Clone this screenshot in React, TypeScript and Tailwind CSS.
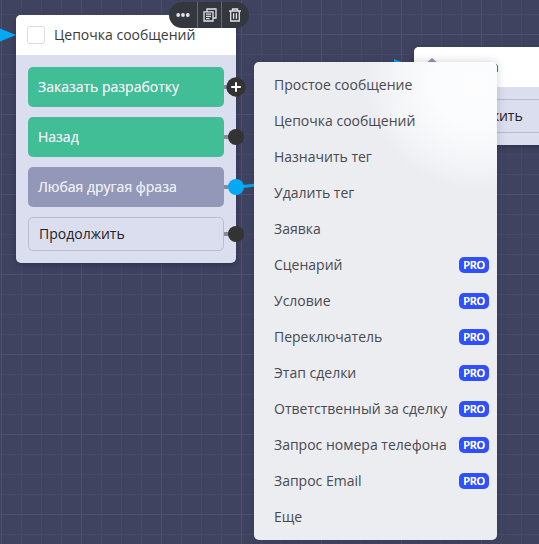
import React from 'react';

type Item = { label: string; pro?: boolean };

const items: Item[] = [
  { label: 'Простое сообщение' },
  { label: 'Цепочка сообщений' },
  { label: 'Назначить тег' },
  { label: 'Удалить тег' },
  { label: 'Заявка' },
  { label: 'Сценарий', pro: true },
  { label: 'Условие', pro: true },
  { label: 'Переключатель', pro: true },
  { label: 'Этап сделки', pro: true },
  { label: 'Ответственный за сделку', pro: true },
  { label: 'Запрос номера телефона', pro: true },
  { label: 'Запрос Email', pro: true },
  { label: 'Еще' },
];

function Grid() {
  return (
    <svg className="absolute inset-0" width="539" height="544" shapeRendering="crispEdges">
      <defs>
        <pattern id="minor" x="1" y="14" width="20" height="20" patternUnits="userSpaceOnUse">
          <path d="M0 0.5H20M0.5 0V20" stroke="#464966" />
        </pattern>
        <pattern id="major" x="1" y="34" width="80" height="80" patternUnits="userSpaceOnUse">
          <path d="M0 0.5H80M0.5 0V80" stroke="#4e516e" />
        </pattern>
      </defs>
      <rect width="539" height="544" fill="url(#minor)" />
      <rect width="539" height="544" fill="url(#major)" />
    </svg>
  );
}

function Port({ kind }: { kind: 'plus' | 'blue' | 'dark' }) {
  return (
    <span className="absolute top-1/2 left-full flex h-5 w-[23px] -translate-y-1/2 items-center">
      <span className="absolute left-0 h-1 w-3 bg-[#858aa0]" />
      {kind === 'plus' ? (
        <svg className="absolute left-[2px]" width="20" height="20" viewBox="0 0 20 20">
          <circle cx="10" cy="10" r="9.7" fill="#333" />
          <path d="M10 5.2v9.6M5.2 10h9.6" stroke="#fff" strokeWidth="2" />
        </svg>
      ) : (
        <span className={`absolute left-[4px] size-4 rounded-full ${kind === 'blue' ? 'bg-[#03a9f4]' : 'bg-[#333]'}`} />
      )}
    </span>
  );
}

function Choice({ label, color, port }: { label: string; color: string; port: 'plus' | 'blue' | 'dark' }) {
  return (
    <div className={`relative flex h-10 items-center rounded-[5px] pl-[10px] text-[#e9edf3] [text-shadow:0_0_0.5px_#e9edf3] ${color}`}>
      {label}
      <Port kind={port} />
    </div>
  );
}

function Toolbar() {
  return (
    <div className="absolute top-[2px] left-[169px] flex h-[26px] w-20 overflow-hidden rounded-full bg-[#35373f] text-[#e2e3e6]">
      <div className="flex w-7 items-center justify-center">
        <svg width="14" height="4" viewBox="0 0 14 4" fill="currentColor">
          <circle cx="2.2" cy="2" r="1.9" />
          <circle cx="7" cy="2" r="1.9" />
          <circle cx="11.8" cy="2" r="1.9" />
        </svg>
      </div>
      <div className="flex w-6 items-center justify-center border-l border-[#696b73]">
        <svg width="14" height="14" viewBox="0 0 14 14" fill="none" stroke="currentColor" strokeWidth="1.3">
          <path d="M4 3.2V1H13V10H10.5M1 3.8H10V13H1ZM3 6.2H8M3 8.4H8M3 10.6H6.5" />
        </svg>
      </div>
      <div className="flex flex-1 items-center border-l border-[#696b73] pl-[6px]">
        <svg width="14" height="14" viewBox="0 0 14 14" fill="none" stroke="currentColor" strokeWidth="1.3">
          <path d="M1 3H13M4.5 3V1H9.5V3M2.7 3V13H11.3V3M5.6 5.2V10.8M8.4 5.2V10.8" />
        </svg>
      </div>
    </div>
  );
}

export default function App() {
  return (
    <div className="relative h-[544px] w-[539px] overflow-hidden bg-[#404360] font-['Open_Sans','Noto_Sans',sans-serif] text-[14px] leading-5">
      <Grid />
      <section className="absolute top-[47px] left-[414px] w-[220px] overflow-hidden rounded-[5px] bg-[#dbdeef] shadow-[0_2px_6px_#1d203c80]">
        <div className="flex h-10 items-center bg-white pl-[10px] text-[#333]">
          <svg className="mr-[11px]" width="17" height="18" viewBox="0 0 17 18" fill="#8f94b8">
            <path d="M8 0L15 6H13V16H3V6H1Z" />
          </svg>
          Заявка
        </div>
        <div className="p-3">
          <div className="flex h-[34px] items-center rounded-[5px] border border-[#b8bacb] pl-[10px] text-[#222]">Продолжить</div>
        </div>
      </section>
      <section className="absolute top-[15px] left-4 w-[220px] rounded-[5px] bg-[#dbdeef] shadow-[0_2px_6px_#1d203c80]">
        <div className="flex h-10 items-center rounded-t-[5px] bg-white pl-[11px] text-[#3a3a3a]">
          <span className="mr-[9px] size-[18px] rounded-[3px] border border-[#d9dbe6] bg-white" />
          Цепочка сообщений
        </div>
        <div className="flex flex-col gap-[10px] p-3">
          <Choice label="Заказать разработку" color="bg-[#41be96]" port="plus" />
          <Choice label="Назад" color="bg-[#41be96]" port="dark" />
          <Choice label="Любая другая фраза" color="bg-[#9498b8]" port="blue" />
          <div className="relative">
            <div className="flex h-[34px] items-center rounded-[5px] border border-[#bbbdce] pl-[10px] text-[#222]">Продолжить</div>
            <Port kind="dark" />
          </div>
        </div>
      </section>
      <svg className="absolute inset-0" width="539" height="544" fill="#03a9f4">
        <path d="M0 28.5L16 35L0 41.5Z" />
        <path d="M394 59L414 67L394 75Z" />
        <path d="M236 187Q246 186.5 258 184.8" fill="none" stroke="#03a9f4" strokeWidth="3" />
      </svg>
      <Toolbar />
      <ul className="absolute top-[62px] left-[254px] h-[478px] w-[243px] rounded-[5px] bg-[#ecedf1] bg-[radial-gradient(110px_105px_at_222px_22px,#fdfdfe_0%,#fbfcfd_40%,#f3f5f8_75%,#ecedf100_100%)] pt-[5px] text-[#484a50] shadow-[0_0_10px_#1d203c33]">
        {items.map((item) => (
          <li key={item.label} className="flex h-9 items-center justify-between pr-2 pl-5">
            <span className="whitespace-nowrap">{item.label}</span>
            {item.pro && (
              <span className="flex h-4 w-[30px] items-center justify-center rounded-[5px] bg-[#304ffe] text-[11px] font-semibold tracking-[-0.35px] text-white [text-shadow:0_0_0.5px_#fff]">PRO</span>
            )}
          </li>
        ))}
      </ul>
    </div>
  );
}
